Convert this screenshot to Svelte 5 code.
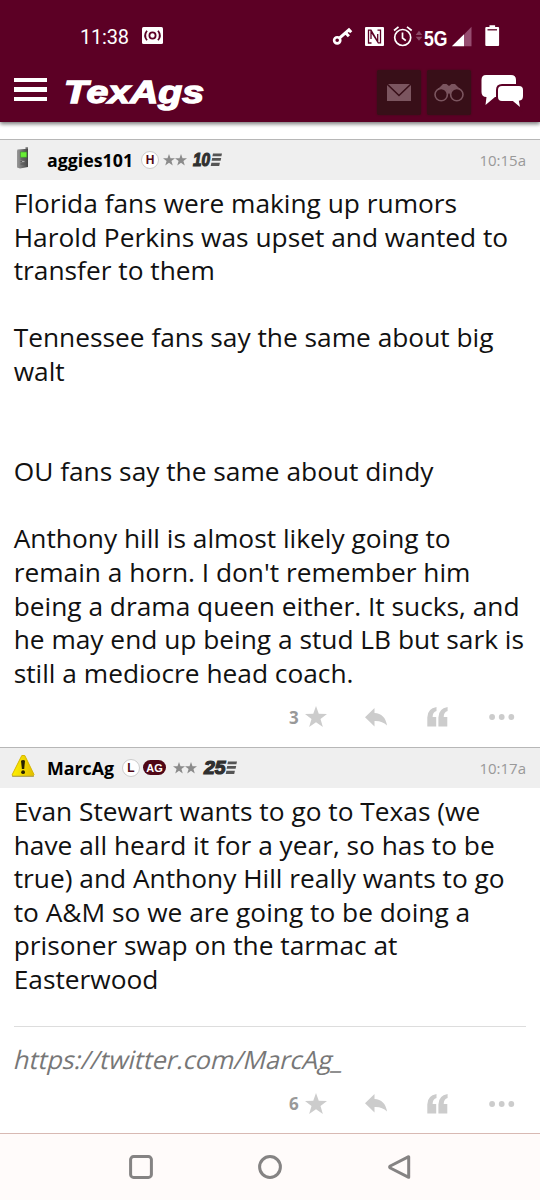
<script>
  const posts = [
    {
      user: 'aggies101', time: '10:15a', icon: 'phone', letter: 'H', ag: false, years: '10', votes: 3,
      lines: [
        'Florida fans were making up rumors',
        'Harold Perkins was upset and wanted to',
        'transfer to them', '',
        'Tennessee fans say the same about big',
        'walt', '', '',
        'OU fans say the same about dindy', '',
        'Anthony hill is almost likely going to',
        "remain a horn. I don't remember him",
        'being a drama queen either. It sucks, and',
        'he may end up being a stud LB but sark is',
        'still a mediocre head coach.'
      ]
    },
    {
      user: 'MarcAg', time: '10:17a', icon: 'warn', letter: 'L', ag: true, years: '25', votes: 6,
      lines: [
        'Evan Stewart wants to go to Texas (we',
        'have all heard it for a year, so has to be',
        'true) and Anthony Hill really wants to go',
        'to A&M so we are going to be doing a',
        'prisoner swap on the tarmac at',
        'Easterwood'
      ],
      signature: 'https://twitter.com/MarcAg_'
    }
  ];
  const star = 'M12 0l3 8.400 9 .2-7.100 5.500 2.600 8.700L12 17.700l-7.500 5.100 2.600-8.700L0 8.600l9-.2z';
</script>

<div class="screen">
  <header>
    <div class="status">
      <span class="clock">11:38</span>
      <svg class="rec" width="21" height="17" viewBox="0 0 21 17">
        <rect width="21" height="17" rx="1.5" fill="#fff" />
        <g fill="none" stroke="#5c0025" stroke-width="1.8"><circle cx="10.5" cy="8.5" r="3.1" /><path d="M5 3.7Q1.2 8.5 5 13.3M16 3.7Q19.8 8.5 16 13.3" /></g>
      </svg>
      <svg class="tray" width="170" height="30" viewBox="332 21 170 30" fill="#fff">
        <g fill="none" stroke="#fff"><circle cx="337.2" cy="40.3" r="3.1" stroke-width="2.6" /><path d="M339.7 37.8L350 28.8M345.5 32.8l3.4 3.5M348.7 29.6l2.5 2.7" stroke-width="3" /></g>
        <rect x="365" y="27" width="19" height="19" rx="1" />
        <path d="M371.500 43h-3V30.2h2.500l6.700 11.3V34M377.500 30.200h3v12.6h-2.200L371 31.5V39" fill="none" stroke="#5c0025" stroke-width="1.3" />
        <g fill="none" stroke="#fff" stroke-width="1.7"><circle cx="402.7" cy="37.5" r="8" /><path d="M402.5 32.5v5.5l3.3 2.7M394 30.5l4.5-3.7M407 26.8l4.7 3.7" /></g>
        <path d="M415.7 35l3.3-4.2 3.3 4.2zM415.7 36.7h6.6l-3.3 4z" fill="#8b4966" />
        <text x="424" y="46.300" class="net" textLength="23.5" lengthAdjust="spacingAndGlyphs">5G</text>
        <path d="M471.5 26.7v19.5H464V34.5z" fill="#964d70" /><path d="M464 34.2v12h-12.2z" />
        <path d="M489.5 27v-1.8h5.6V27h3a1 1 0 0 1 1 1v17a1 1 0 0 1-1 1h-11.8a1 1 0 0 1-1-1V28a1 1 0 0 1 1-1z" /><path d="M487.5 29.8h9.5" stroke="#5c0025" stroke-width="1.3" />
      </svg>
    </div>
    <div class="bar">
      <div class="menu"><i></i><i></i><i></i></div>
      <svg class="logo" width="150" height="45" viewBox="0 0 150 45">
        <text x="1" y="30.500" textLength="140" lengthAdjust="spacingAndGlyphs">TexAgs</text>
      </svg>
      <div class="btn"><svg width="24" height="17" viewBox="0 0 24 17"><rect width="24" height="17" fill="#7b555f" /><path d="M0 0l12 11.5L24 0" fill="none" stroke="#380f18" stroke-width="1.6" /></svg></div>
      <div class="btn"><svg width="30" height="19" viewBox="0 0 30 19" fill="none" stroke="#7b555f"><path d="M2 8L9 1h3.5l2.5 2 2.5-2H21l7 7-6-2-7 5-7-5z" fill="#7b555f" stroke="none" /><circle cx="7.2" cy="11.6" r="6.2" stroke-width="1.6" fill="#380f18" /><circle cx="22.8" cy="11.6" r="6.2" stroke-width="1.6" fill="#380f18" /></svg></div>
      <svg class="chat" width="44" height="36" viewBox="0 0 44 36">
        <path d="M5 0h25q5 0 5 5v12q0 5-5 5H14l-9.500 8 1-8Q.5 22 .5 17V5q0-5 4.500-5z" fill="#fff" />
        <path d="M21 10h17q5 0 5 5v6q0 5-4 5.500l1.500 8-9-7.500H21q-5 0-5-5V15q0-5 5-5z" fill="#fff" stroke="#5c0025" stroke-width="2" />
      </svg>
    </div>
  </header>

  <main>
    {#each posts as p}
      <article>
        <div class="head">
          {#if p.icon === 'phone'}
            <svg class="avatar" width="26" height="26" viewBox="0 0 26 26">
              <defs><linearGradient id="ph"><stop stop-color="#999" /><stop offset="1" stop-color="#444" /></linearGradient></defs>
              <path d="M15.500 5V1.200h2.500V5z" fill="#777" /><path d="M7.500 3.500l10.500-.8V21l-8 1.500-3-1V5z" fill="url(#ph)" />
              <rect x="10.500" y="6" width="6.300" height="5.200" fill="#69ed35" stroke="#399428" stroke-width=".6" /><path d="M10.500 13h6M10.500 15.500h6M10.500 18h5.500" stroke="#555" stroke-width="1" /><path d="M12 15.500h2.500" stroke="#aaa" />
            </svg>
          {:else}
            <svg class="avatar" width="26" height="26" viewBox="0 0 26 26">
              <defs><linearGradient id="wn"><stop stop-color="#fff200" /><stop offset="1" stop-color="#e1bd00" /></linearGradient></defs>
              <path d="M11.800 1.500h3l9.200 19-1 1.800H3L2 21z" fill="url(#wn)" stroke="#d7b600" stroke-linejoin="round" /><path d="M2 22.300h22" stroke="#aaa06a" stroke-width="1" />
              <path d="M11 6.800q2.200-1.700 4 0l-.8 8.200h-2.300z" fill="#272200" /><circle cx="13.100" cy="18.200" r="1.900" fill="#272200" />
            </svg>
          {/if}
          <span class="name" class:marc={p.ag}>{p.user}</span>
          <span class="letter">{p.letter}</span>
          {#if p.ag}<span class="ag">AG</span>{/if}
          <svg class="stars" width="24" height="12" viewBox="0 0 48 24" fill="#8b8b8b"><path d={star} /><path d={star} transform="translate(24)" /></svg>
          <svg class="years" class:wide={p.ag} width={p.ag ? 37 : 32} height="26" viewBox="0 -5 {p.ag ? 37 : 32} 26">
            <text x="1" y="14" textLength={p.ag ? 21.500 : 17} lengthAdjust="spacingAndGlyphs">{p.years}</text>
            <g transform="translate({p.ag ? 4 : 0})" fill="#555"><path d="M21 1.500h9l-.6 2.700h-9zM20.200 6h9l-.6 2.700h-9zM19.400 10.700h8.500l-.7 3.300h-8.500z" /></g>
          </svg>
          <time>{p.time}</time>
        </div>
        <div class="body">
          {#each p.lines as line}<div class="line">{line}</div>{/each}
        </div>
        {#if p.signature}<div class="sig"><span>{p.signature}</span></div>{/if}
        <div class="actions" class:second={p.signature}>
          <b>{p.votes}</b>
          <svg class="fav" width="22" height="22" viewBox="0 0 24 24"><path d={star} /></svg>
          <svg class="reply" width="22" height="19" viewBox="0 0 22 19"><path d="M0 9.300L9.500 0v5Q20 5.500 22 17.500q-5-5-12.500-4.500v5.500z" /></svg>
          <svg class="quote" width="21" height="20" viewBox="0 0 21 20"><path d="M9.500 0v4Q5.700 5 5.600 10h3.600v9.500H.3V10.500Q.3 1.500 9.500 0zM20.600 0v4Q16.800 5 16.700 10h3.600v9.500h-8.900V10.500Q11.400 1.500 20.600 0z" /></svg>
          <svg class="dots" width="26" height="6" viewBox="0 0 26 6"><circle cx="3.100" cy="3" r="2.900" /><circle cx="12.700" cy="3" r="2.900" /><circle cx="22.300" cy="3" r="2.900" /></svg>
        </div>
      </article>
    {/each}
  </main>

  <nav>
    <svg width="24" height="24" viewBox="0 0 24 24"><rect x="1.600" y="1.600" width="20.800" height="20.800" rx="3" /></svg>
    <svg width="24" height="24" viewBox="0 0 24 24"><circle cx="12" cy="12" r="10.400" /></svg>
    <svg width="24" height="24" viewBox="0 0 24 24"><path d="M21.700 1.700L3.300 11q-1.400 1 0 2l18.400 9.300z" stroke-linejoin="round" /></svg>
  </nav>
</div>

<style>
  :global(body) { background: #fff; overflow: hidden; }
  .screen { width: 540px; height: 1200px; display: flex; flex-direction: column; background: #fff; font-family: "Open Sans", sans-serif; color: #111; overflow: hidden; }
  svg { display: block; flex: none; overflow: visible; }
  header { height: 122px; flex: none; background: #5c0025; box-shadow: 0 2px 4px #777; box-sizing: border-box; }
  .status { height: 70px; padding: 4px 38px 0 80px; box-sizing: border-box; display: flex; align-items: center; }
  .clock { width: 62px; font: 20px/24px Roboto, sans-serif; letter-spacing: -.2px; color: #fff; }
  .rec { margin-bottom: 4px; }
  .tray { margin-left: auto; margin-bottom: 2px; }
  .net { font: bold 22px "Liberation Sans", sans-serif; }
  .bar { height: 45px; display: flex; align-items: center; padding: 0 15px 0 14px; }
  .menu { width: 33px; display: grid; gap: 5.500px; margin: 0 16px 6px 0; }
  .menu i { height: 4.300px; background: #fff; }
  .logo { margin-right: auto; margin-top: 3px; }
  .logo text { font: italic bold 31px "Liberation Sans", sans-serif; fill: #fff; stroke: #fff; stroke-width: 1.4px; }
  .btn { width: 44px; height: 45px; margin-right: 6px; background: #380f18; box-shadow: 0 0 2px #380f18; border-radius: 2px; display: flex; align-items: center; justify-content: center; }
  .chat { margin: 0 0 0 4px; }
  main { flex: 1; padding-top: 17px; display: flex; flex-direction: column; }
  .head { height: 41px; box-sizing: border-box; display: flex; align-items: center; background: #efefef; border-top: 1.500px solid #b7b7b7; padding: 0 14px 1px 10px; }
  .avatar { margin-right: 11px; margin-bottom: 2px; }
  .name { width: 94px; font-weight: 700; font-size: 17.800px; line-height: 24px; color: #000; }
  .marc { width: 75px; }
  .letter { width: 16px; height: 16px; border-radius: 50%; border: 1px solid #ccc; background: #fff; display: flex; align-items: center; justify-content: center; font: bold 12px "Liberation Sans", sans-serif; color: #500716; }
  .ag { width: 23px; height: 15px; border-radius: 8px; margin-left: 3px; background: #500716; color: #fff; display: flex; align-items: center; justify-content: center; font: bold 11px "Liberation Sans", sans-serif; }
  .stars { margin-left: 4px; }
  .ag + .stars { margin-left: 7px; }
  .years { margin-left: 5px; }
  .years.wide { margin-left: 6px; }
  .years text { font: italic bold 17.500px "Liberation Sans", sans-serif; fill: #303030; stroke: #303030; stroke-width: 1.2px; }
  time { margin-left: auto; font-size: 15px; color: #999; }
  .body { padding: 7px 13.700px 0; }
  .line { height: 33.550px; line-height: 33.550px; font-size: 26.300px; white-space: pre; }
  .sig { margin: 30px 14px 0; padding: 16px 0 0 1px; border-top: 1px solid #ddd; font-size: 25.200px; line-height: 32px; color: #777; }
  .sig span { display: inline-block; transform: skewX(-14deg); }
  .actions { height: 57px; box-sizing: border-box; display: flex; align-items: center; fill: #ccc; padding-bottom: 3px; }
  .actions.second { padding-bottom: 0; }
  b { width: 16px; margin-left: 289px; font-size: 17px; color: #999; }
  .reply { margin-left: 38px; }
  .quote { margin-left: 40px; }
  .dots { margin-left: 41px; }
  nav { height: 67px; flex: none; box-sizing: border-box; border-top: 1px solid #d8b9b3; background: #fffbfa; display: flex; justify-content: center; align-items: center; gap: 105px; }
  nav svg { fill: none; stroke: #858383; stroke-width: 3; }
</style>
